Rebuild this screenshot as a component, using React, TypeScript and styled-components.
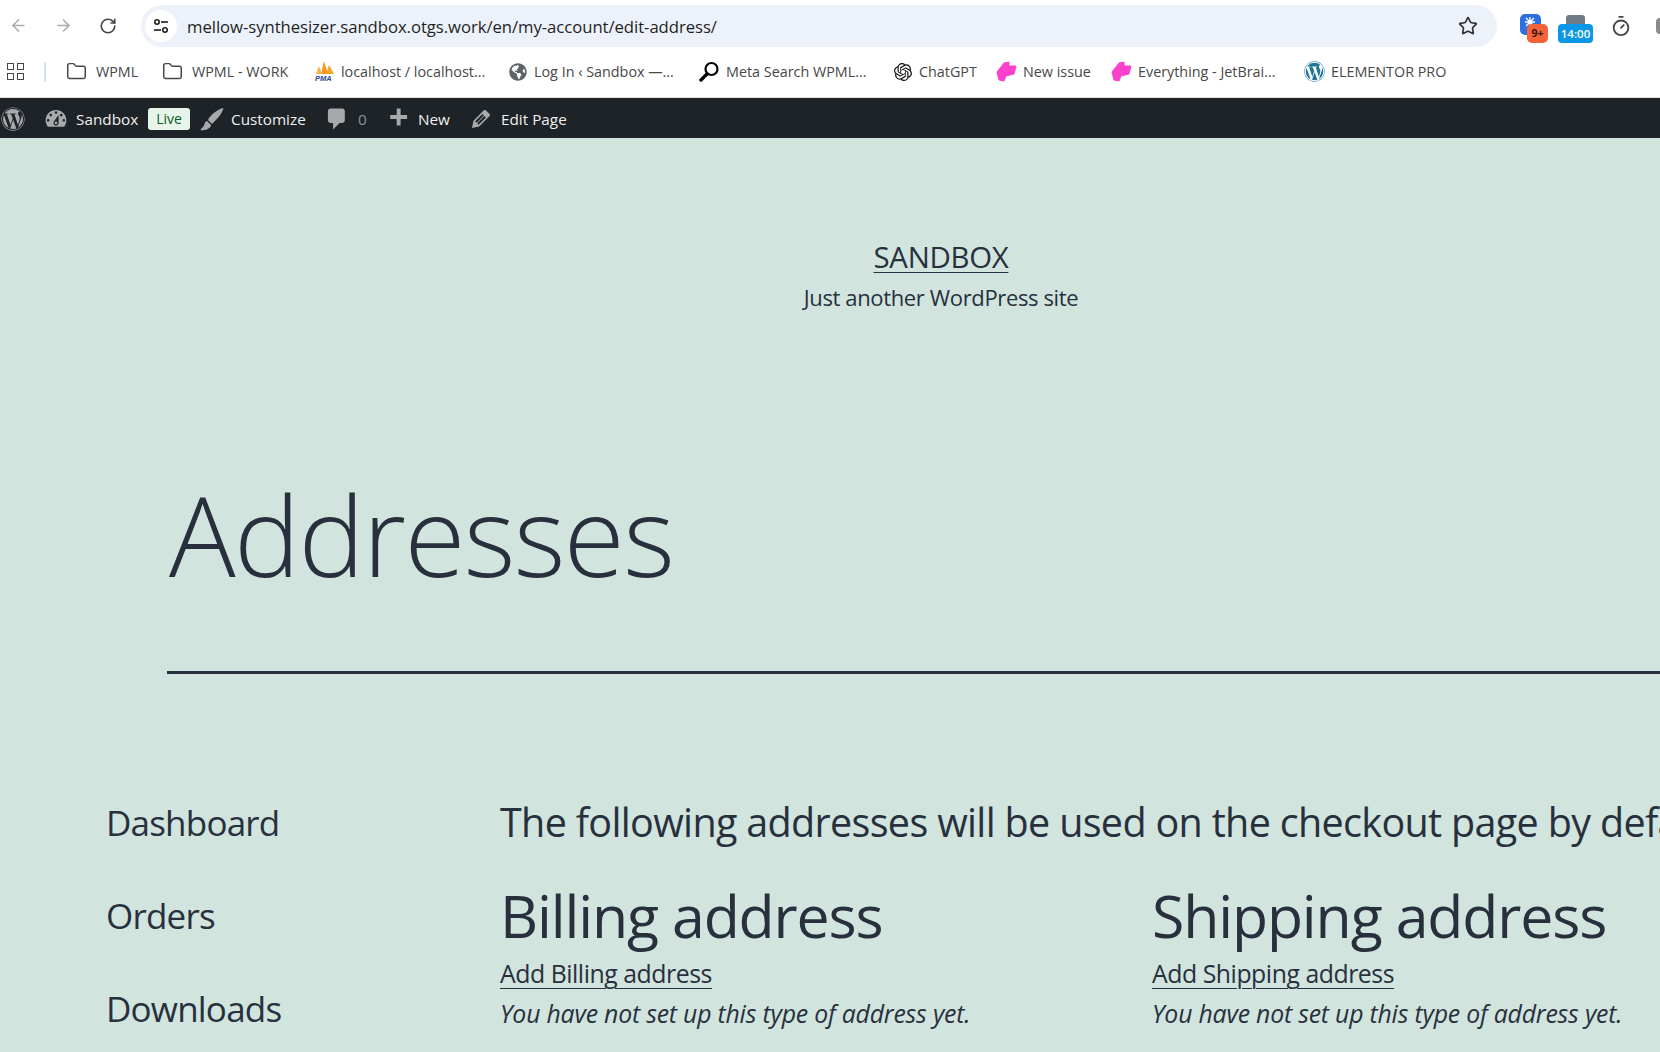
import React from "react";
import styled, { createGlobalStyle } from "styled-components";
import { ArrowLeft, ArrowRight, RotateCw, Star, Timer, Folder } from "lucide-react";
import { FaWordpress, FaGlobeAmericas } from "react-icons/fa";
import { SiOpenai } from "react-icons/si";

const Global = createGlobalStyle`
  html, body { margin: 0; padding: 0; background: #d1e4dd; overflow: hidden; }
  body { width: 1660px; height: 1052px; font-family: "Open Sans", "Noto Sans", sans-serif; }
  * { box-sizing: border-box; }
`;

const Shell = styled.div`
  width: 1660px;
  height: 1052px;
  overflow: hidden;
  display: flex;
  flex-direction: column;
`;

const Toolbar = styled.div`
  height: 50px;
  flex: none;
  background: #fff;
  display: flex;
  align-items: center;
  padding: 1px 0 0 9px;
`;
const NavButton = styled.div<{ $w: number; $c: string }>`
  width: ${(p) => p.$w}px;
  flex: none;
  color: ${(p) => p.$c};
  display: flex;
`;
const UrlBar = styled.div`
  width: 1356px;
  height: 42px;
  margin-left: 9px;
  flex: none;
  background: #edf2fa;
  border-radius: 21px;
  display: flex;
  align-items: center;
  padding: 0 19px 0 4px;
`;
const SiteChip = styled.div`
  width: 32px;
  height: 32px;
  border-radius: 50%;
  background: #fff;
  display: flex;
  align-items: center;
  justify-content: center;
  flex: none;
`;
const UrlText = styled.div`
  margin-left: 10px;
  padding-top: 1px;
  flex: 1;
  font-size: 16.7px;
  letter-spacing: -0.05px;
  color: #1f1f1f;
  white-space: nowrap;
`;
const Extensions = styled.div`
  display: flex;
  align-items: center;
  margin-left: 23px;
  flex: none;
`;
const FrostIcon = styled.div`
  position: relative;
  width: 21px;
  height: 21px;
  margin: -3px 0 0 0;
  background: #2b6fe0;
  border-radius: 5px;
  flex: none;
  display: flex;
`;
const CountBadge = styled.span`
  position: absolute;
  left: 7px;
  top: 10px;
  width: 21px;
  height: 19px;
  border-radius: 5px;
  background: #f4633a;
  color: #3a1208;
  font-size: 10.5px;
  font-weight: 700;
  line-height: 19px;
  text-align: center;
`;
const ClockIcon = styled.div`
  position: relative;
  width: 36px;
  height: 28px;
  margin: 6px 0 0 17px;
  flex: none;
`;
const ClockTop = styled.span`
  position: absolute;
  left: 8px;
  top: 0;
  width: 19px;
  height: 10px;
  border-radius: 3px 3px 0 0;
  background: #6f7c88;
`;
const ClockFace = styled.span`
  position: absolute;
  left: 0;
  top: 9px;
  width: 35px;
  height: 19px;
  border-radius: 4px;
  background: #0b97e6;
  color: #fff;
  font-size: 11.5px;
  font-weight: 600;
  line-height: 19px;
  text-align: center;
`;
const ToolIcon = styled.div<{ $ml: number }>`
  margin-left: ${(p) => p.$ml}px;
  color: #474747;
  display: flex;
  flex: none;
`;
const ClippedTab = styled.div`
  width: 10px;
  height: 16px;
  border-radius: 4px 0 0 4px;
  background: #8a8a8a;
`;

const Bookmarks = styled.div`
  height: 48px;
  flex: none;
  background: #fff;
  display: flex;
  align-items: center;
  padding: 0 0 4px 7px;
  border-bottom: 1px solid #e3e3e3;
`;
const AppsGrid = styled.div`
  width: 17px;
  height: 17px;
  display: grid;
  grid-template-columns: 7px 7px;
  grid-template-rows: 7px 7px;
  gap: 3px;
  flex: none;
`;
const AppsCell = styled.span`
  border: 1.6px solid #474747;
`;
const Divider = styled.div`
  width: 2px;
  height: 20px;
  background: #d3e3fd;
  margin: 0 20px 0 20px;
  flex: none;
`;
const Bookmark = styled.div<{ $w: number; $gap?: number }>`
  width: ${(p) => p.$w}px;
  flex: none;
  display: flex;
  align-items: center;
  gap: ${(p) => p.$gap ?? 6}px;
  font-size: 14.35px;
  color: #474747;
  white-space: nowrap;
`;
const BookmarkIcon = styled.span`
  width: 21px;
  height: 22px;
  flex: none;
  display: flex;
  align-items: center;
  justify-content: center;
`;

const AdminBar = styled.div`
  height: 40px;
  flex: none;
  background: #1d2327;
  display: flex;
  align-items: center;
  padding-left: 1px;
  color: #f0f0f1;
  font-size: 15.3px;
  white-space: nowrap;
`;
const AdminItem = styled.div<{ $w: number; $gap?: number }>`
  width: ${(p) => p.$w}px;
  flex: none;
  display: flex;
  align-items: center;
  gap: ${(p) => p.$gap ?? 7}px;
  padding-top: 1px;
`;
const AdminGlyph = styled.span`
  color: #a7aaad;
  display: flex;
  flex: none;
`;
const LiveBadge = styled.span`
  width: 42px;
  height: 22px;
  flex: none;
  margin: 1px 10px 0 0;
  background: #e6f4ea;
  color: #0a5c26;
  border-radius: 3px;
  font-size: 14px;
  font-weight: 500;
  line-height: 22px;
  text-align: center;
`;
const Zero = styled.span`
  color: #8c8f94;
`;

const Page = styled.main`
  flex: 1;
  min-height: 0;
  background: #d1e4dd;
  color: #28303d;
  font-weight: 400;
`;
const Branding = styled.header`
  width: 1882px;
  padding-top: 99px;
  text-align: center;
  height: 310px;
`;
const SiteTitle = styled.a`
  display: block;
  font-size: 29.4px;
  line-height: 40px;
  color: #28303d;
  text-decoration: underline;
  text-decoration-thickness: 1px;
  text-underline-offset: 4px;
  font-weight: 400;
  letter-spacing: -0.3px;
`;
const Tagline = styled.div`
  font-size: 22px;
  line-height: 30px;
  margin-top: 5px;
  letter-spacing: -0.36px;
`;
const TitleBlock = styled.div`
  margin-left: 167px;
  height: 226px;
  padding: 14px 0 0 2px;
  border-bottom: 3px solid #28303d;
`;
const PageTitle = styled.h1`
  margin: 0;
  font-size: 111px;
  line-height: 144px;
  font-weight: 300;
  letter-spacing: -1.65px;
  white-space: nowrap;
`;
const Account = styled.div`
  display: grid;
  grid-template-columns: 394px 1fr;
  padding: 123px 0 0 106px;
`;
const SideNav = styled.nav`
  display: flex;
  flex-direction: column;
  gap: 43px;
  padding-top: 1px;
  font-size: 35px;
  line-height: 50px;
  letter-spacing: -0.8px;
`;
const Content = styled.div`
  white-space: nowrap;
`;
const Intro = styled.p`
  margin: 0;
  font-size: 39.5px;
  line-height: 50px;
  letter-spacing: -0.67px;
`;
const Columns = styled.div`
  display: grid;
  grid-template-columns: 652px 652px;
  margin-top: 28px;
`;
const Heading = styled.h2`
  margin: 0;
  font-size: 59px;
  line-height: 81px;
  font-weight: 400;
  letter-spacing: -1.15px;
`;
const AddLink = styled.a`
  display: inline-block;
  font-size: 24.8px;
  line-height: 34px;
  color: #28303d;
  text-decoration: underline;
  text-decoration-thickness: 1px;
  text-underline-offset: 5px;
  letter-spacing: -0.45px;
`;
const Note = styled.em`
  display: block;
  font-size: 24.8px;
  line-height: 34px;
  margin-top: 6px;
  letter-spacing: -0.19px;
`;

const DASH = {
  gauge:
    "M3.76 16h12.48c1.1-1.37 1.76-3.11 1.76-5 0-4.42-3.58-8-8-8s-8 3.58-8 8c0 1.89.66 3.63 1.76 5zM10 4c.55 0 1 .45 1 1s-.45 1-1 1-1-.45-1-1 .45-1 1-1zM6 6c.55 0 1 .45 1 1s-.45 1-1 1-1-.45-1-1 .45-1 1-1zm8 0c.55 0 1 .45 1 1s-.45 1-1 1-1-.45-1-1 .45-1 1-1zm-5.37 5.55L12 7v6c0 1.1-.9 2-2 2s-2-.9-2-2c0-.57.24-1.08.63-1.45zM4 10c.55 0 1 .45 1 1s-.45 1-1 1-1-.45-1-1 .45-1 1-1zm12 0c.55 0 1 .45 1 1s-.45 1-1 1-1-.45-1-1 .45-1 1-1zm-5 3c0-.55-.45-1-1-1s-1 .45-1 1 .45 1 1 1 1-.45 1-1z",
  comment: "M5 2h9c1.1 0 2 .9 2 2v7c0 1.1-.9 2-2 2h-2l-5 5v-5H5c-1.1 0-2-.9-2-2V4c0-1.1.9-2 2-2z",
  plus: "M17 7v3h-5v5H9v-5H4V7h5V2h3v5h5z",
  pencil:
    "M13.89 3.39l2.71 2.72c.46.46.42 1.24.03 1.64l-8.01 8.02-5.56 1.16 1.16-5.58s7.6-7.63 7.99-8.03c.39-.39 1.22-.39 1.68.07zm-2.73 2.79l-5.59 5.61 1.11 1.11 5.54-5.65zm-2.97 8.23l5.58-5.6-1.07-1.08-5.59 5.6z",
};

const Dashicon = ({ d }: { d: string }) => (
  <svg width="26" height="26" viewBox="0 0 20 20" fill="currentColor">
    <path fillRule="evenodd" d={d} />
  </svg>
);
const BrushGlyph = () => (
  <svg width="24" height="24" viewBox="0 0 24 24" fill="currentColor">
    <path d="M23.5 1 C18 2 10 8 8 13 L12 17 C17 12 22 7 23.5 1 Z" />
    <path d="M7 14 C4 15 5 18 3 20 C2 21 .5 22 .5 23 C6 24 11 21 11 18 Z" />
  </svg>
);
const TuneGlyph = () => (
  <svg width="18" height="18" viewBox="0 0 18 18" fill="none" stroke="#1f1f1f" strokeWidth="1.6">
    <circle cx="5" cy="5" r="2.2" />
    <path d="M9 5 H16" />
    <path d="M2 13 H9" />
    <circle cx="13" cy="13" r="2.2" />
  </svg>
);
const FrostGlyph = () => (
  <svg width="14" height="12" viewBox="0 0 14 12" stroke="#fff" strokeWidth="1.3" style={{ margin: "2px 0 0 3px" }}>
    <path d="M7 1 V11 M2 6 H12 M3 2 L11 10 M11 2 L3 10" />
  </svg>
);
const MagnifierIcon = () => (
  <svg width="21" height="21" viewBox="0 0 21 21" fill="none">
    <circle cx="12.5" cy="8" r="6" stroke="#000" strokeWidth="2.2" />
    <path d="M8 13 L2 19" stroke="#000" strokeWidth="3.4" strokeLinecap="round" />
  </svg>
);
const PmaIcon = () => (
  <svg width="21" height="21" viewBox="0 0 21 21">
    <path d="M10 0 L14 13 L7 13 Z" fill="#f29a1f" />
    <path d="M5 5 L8 13 L2 13 Z" fill="#f6b24a" />
    <path d="M15 4 L20 13 L12 13 Z" fill="#f6a327" />
    <text x="1" y="20" fontSize="7.5" fontWeight="700" fontStyle="italic" fill="#2b4a8f" fontFamily="Liberation Sans">PMA</text>
  </svg>
);
const SpaceIcon = () => (
  <svg width="21" height="21" viewBox="0 0 21 21">
    <path d="M1 11 L8 2 L13 1 L13 5 L20 5 L18 13 L10 15 L8 20 L3 19 Z" fill="#fb41cc" stroke="#fb41cc" strokeWidth="1" strokeLinejoin="round" />
  </svg>
);

export default function App() {
  return (
    <Shell>
      <Global />
      <Toolbar>
        <NavButton $w={45} $c="#a9adb3"><ArrowLeft size={19} /></NavButton>
        <NavButton $w={45} $c="#a9adb3"><ArrowRight size={19} /></NavButton>
        <NavButton $w={33} $c="#474747"><RotateCw size={18} strokeWidth={2.2} /></NavButton>
        <UrlBar>
          <SiteChip><TuneGlyph /></SiteChip>
          <UrlText>mellow-synthesizer.sandbox.otgs.work/en/my-account/edit-address/</UrlText>
          <Star size={20} strokeWidth={2} color="#333" />
        </UrlBar>
        <Extensions>
          <FrostIcon><FrostGlyph /><CountBadge>9+</CountBadge></FrostIcon>
          <ClockIcon><ClockTop /><ClockFace>14:00</ClockFace></ClockIcon>
          <ToolIcon $ml={16}><Timer size={22} /></ToolIcon>
          <ToolIcon $ml={24}><ClippedTab /></ToolIcon>
        </Extensions>
      </Toolbar>
      <Bookmarks>
        <AppsGrid><AppsCell /><AppsCell /><AppsCell /><AppsCell /></AppsGrid>
        <Divider />
        <Bookmark $w={96} $gap={9}><BookmarkIcon><Folder size={21} color="#474747" strokeWidth={1.7} /></BookmarkIcon>WPML</Bookmark>
        <Bookmark $w={152} $gap={9}><BookmarkIcon><Folder size={21} color="#474747" strokeWidth={1.7} /></BookmarkIcon>WPML - WORK</Bookmark>
        <Bookmark $w={193}><BookmarkIcon><PmaIcon /></BookmarkIcon>localhost / localhost...</Bookmark>
        <Bookmark $w={192}><BookmarkIcon><FaGlobeAmericas size={18} color="#5f6368" /></BookmarkIcon>Log In ‹ Sandbox —...</Bookmark>
        <Bookmark $w={193}><BookmarkIcon><MagnifierIcon /></BookmarkIcon>Meta Search WPML...</Bookmark>
        <Bookmark $w={104}><BookmarkIcon><SiOpenai size={18} color="#111" /></BookmarkIcon>ChatGPT</Bookmark>
        <Bookmark $w={115}><BookmarkIcon><SpaceIcon /></BookmarkIcon>New issue</Bookmark>
        <Bookmark $w={193}><BookmarkIcon><SpaceIcon /></BookmarkIcon>Everything - JetBrai...</Bookmark>
        <Bookmark $w={160}><BookmarkIcon><FaWordpress size={21} color="#21759b" /></BookmarkIcon>ELEMENTOR PRO</Bookmark>
      </Bookmarks>
      <AdminBar>
        <AdminItem $w={42}><AdminGlyph><FaWordpress size={24} /></AdminGlyph></AdminItem>
        <AdminItem $w={105} $gap={7}><AdminGlyph><Dashicon d={DASH.gauge} /></AdminGlyph>Sandbox</AdminItem>
        <LiveBadge>Live</LiveBadge>
        <AdminItem $w={124}><AdminGlyph><BrushGlyph /></AdminGlyph>Customize</AdminItem>
        <AdminItem $w={61} $gap={8}><AdminGlyph><Dashicon d={DASH.comment} /></AdminGlyph><Zero>0</Zero></AdminItem>
        <AdminItem $w={83}><AdminGlyph><Dashicon d={DASH.plus} /></AdminGlyph>New</AdminItem>
        <AdminItem $w={110}><AdminGlyph><Dashicon d={DASH.pencil} /></AdminGlyph>Edit Page</AdminItem>
      </AdminBar>
      <Page>
        <Branding>
          <SiteTitle>SANDBOX</SiteTitle>
          <Tagline>Just another WordPress site</Tagline>
        </Branding>
        <TitleBlock><PageTitle>Addresses</PageTitle></TitleBlock>
        <Account>
          <SideNav>
            <span>Dashboard</span>
            <span>Orders</span>
            <span>Downloads</span>
          </SideNav>
          <Content>
            <Intro>The following addresses will be used on the checkout page by default.</Intro>
            <Columns>
              <div>
                <Heading>Billing address</Heading>
                <AddLink>Add Billing address</AddLink>
                <Note>You have not set up this type of address yet.</Note>
              </div>
              <div>
                <Heading>Shipping address</Heading>
                <AddLink>Add Shipping address</AddLink>
                <Note>You have not set up this type of address yet.</Note>
              </div>
            </Columns>
          </Content>
        </Account>
      </Page>
    </Shell>
  );
}
